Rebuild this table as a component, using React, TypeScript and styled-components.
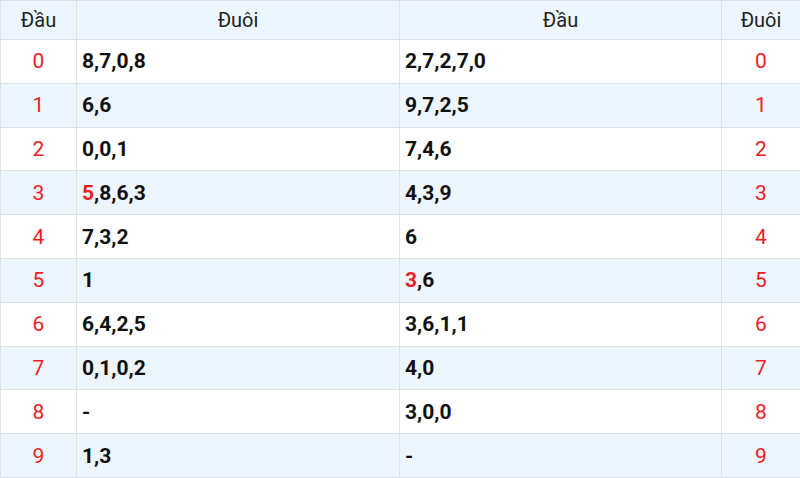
import React from 'react';
import styled, { createGlobalStyle } from 'styled-components';

const GlobalStyle = createGlobalStyle`
    html, body {
        margin: 0;
        padding: 0;
        background: #fff;
        font-family: Roboto, "Liberation Sans", Arial, sans-serif;
    }
`;

const Table = styled.table`
    width: 800px;
    border-collapse: collapse;
    table-layout: fixed;
`;

const HeadRow = styled.tr`
    height: 39px;
    background: #edf5fd;
`;

const HeadCell = styled.th`
    font-weight: 400;
    font-size: 20px;
    color: #222;
    text-align: center;
    border: 1px solid #dbe2ea;
    padding: 0;
`;

const Row = styled.tr<{ $alt: boolean }>`
    height: 43.8px;
    background: ${(p) => (p.$alt ? '#edf5fd' : '#fff')};
`;

const NumCell = styled.td`
    text-align: center;
    color: #ee1c25;
    font-size: 21px;
    border: 1px solid #dbe2ea;
    padding: 0;
`;

const ValueCell = styled.td`
    font-weight: 700;
    font-size: 21px;
    color: #111;
    border: 1px solid #dbe2ea;
    padding: 0 5px;
`;

const Hot = styled.span`
    color: #ee1c25;
`;

type Cell = { text: string; hot?: boolean };

const rows: { tail: Cell[]; head: Cell[] }[] = [
    { tail: [{ text: '8,7,0,8' }], head: [{ text: '2,7,2,7,0' }] },
    { tail: [{ text: '6,6' }], head: [{ text: '9,7,2,5' }] },
    { tail: [{ text: '0,0,1' }], head: [{ text: '7,4,6' }] },
    { tail: [{ text: '5', hot: true }, { text: ',8,6,3' }], head: [{ text: '4,3,9' }] },
    { tail: [{ text: '7,3,2' }], head: [{ text: '6' }] },
    { tail: [{ text: '1' }], head: [{ text: '3', hot: true }, { text: ',6' }] },
    { tail: [{ text: '6,4,2,5' }], head: [{ text: '3,6,1,1' }] },
    { tail: [{ text: '0,1,0,2' }], head: [{ text: '4,0' }] },
    { tail: [{ text: '-' }], head: [{ text: '3,0,0' }] },
    { tail: [{ text: '1,3' }], head: [{ text: '-' }] },
];

const renderCells = (cells: Cell[]) =>
    cells.map((c, i) => (c.hot ? <Hot key={i}>{c.text}</Hot> : <React.Fragment key={i}>{c.text}</React.Fragment>));

const App = () => {
    return (
        <>
            <GlobalStyle />
            <Table>
                <colgroup>
                    <col style={{ width: 76 }} />
                    <col style={{ width: 323 }} />
                    <col style={{ width: 322 }} />
                    <col style={{ width: 79 }} />
                </colgroup>
                <thead>
                    <HeadRow>
                        <HeadCell>Đầu</HeadCell>
                        <HeadCell>Đuôi</HeadCell>
                        <HeadCell>Đầu</HeadCell>
                        <HeadCell>Đuôi</HeadCell>
                    </HeadRow>
                </thead>
                <tbody>
                    {rows.map((r, i) => (
                        <Row key={i} $alt={i % 2 === 1}>
                            <NumCell>{i}</NumCell>
                            <ValueCell>{renderCells(r.tail)}</ValueCell>
                            <ValueCell>{renderCells(r.head)}</ValueCell>
                            <NumCell>{i}</NumCell>
                        </Row>
                    ))}
                </tbody>
            </Table>
        </>
    );
};

export default App;
